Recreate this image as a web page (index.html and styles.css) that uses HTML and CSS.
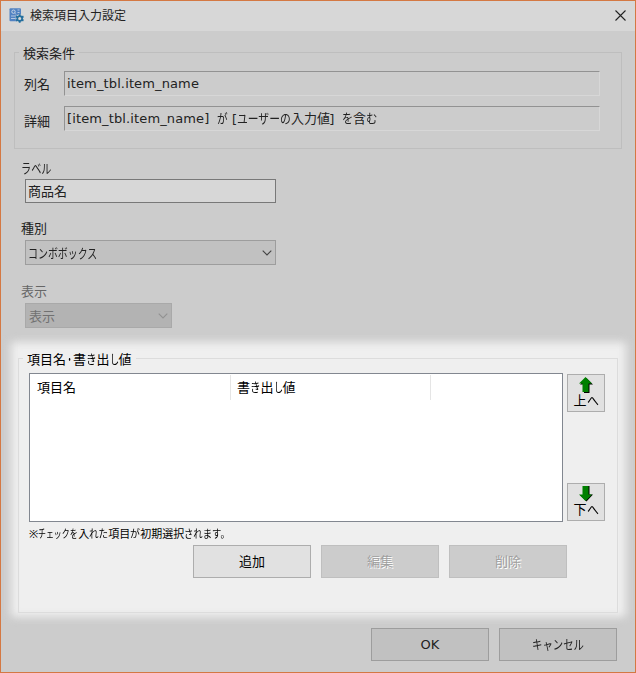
FILE: index.html
```html
<!DOCTYPE html>
<html lang="ja">
<head>
<meta charset="utf-8">
<title>検索項目入力設定</title>
<link rel="stylesheet" href="styles.css">
</head>
<body>
<main class="dialog">
  <header class="titlebar">
    <svg class="app-icon" width="15" height="15" viewBox="0 0 15 15">
      <rect x="0.5" y="0.3" width="11.500" height="13" rx="1" fill="#5182c2"/>
      <circle cx="4.500" cy="3.700" r="1.700" fill="none" stroke="#c8d5e5"/>
      <path d="M6 5.200 7 6.500M8.500 2h2M8.500 4.500h2M2 8h5M2 10.500h4" stroke="#b5c8e0" fill="none"/>
      <circle cx="10.700" cy="10.500" r="4.300" fill="#d7d7d7"/>
      <path d="M10.700 6.300v8.400M6.900 8.400l7.600 4.200M6.900 12.600l7.600-4.200" stroke="#246f9e" stroke-width="1.800"/>
      <circle cx="10.700" cy="10.500" r="2.400" fill="#d7d7d7" stroke="#246f9e" stroke-width="1.700"/>
    </svg>
    <h1 class="title">検索項目入力設定</h1>
    <svg class="close" width="11" height="11" viewBox="0 0 11 11"><path d="M.5.5l10 10M10.500.5l-10 10" stroke="#222" stroke-width="1.100"/></svg>
  </header>

  <section class="group condition">
    <h2 class="legend">検索条件</h2>
    <div class="row"><span class="name">列名</span><div class="sunken"><span class="query">item_tbl.item_name</span></div></div>
    <div class="row"><span class="name detail">詳細</span><div class="sunken"><span class="query wide">[item_tbl.item_name]</span><span class="fit ga">が</span><span class="bracket">[</span><span class="fit user">ユーザーの</span>入力値<span class="bracket close-b">]</span><span class="fit wo">を</span>含<span class="fit mu">む</span></div></div>
  </section>

  <section class="fields">
    <label class="caption"><span class="fit label-kana">ラベル</span></label>
    <div class="box input">商品名</div>
    <label class="caption">種別</label>
    <div class="box select"><span class="fit combo">コンボボックス</span><svg width="10" height="6" viewBox="0 0 10 6"><path d="M.7.7 5 5 9.300.7" fill="none" stroke="#444" stroke-width="1.100"/></svg></div>
    <label class="caption muted">表示</label>
    <div class="box select disabled">表示<svg width="10" height="6" viewBox="0 0 10 6"><path d="M.7.7 5 5 9.300.7" fill="none" stroke="#929292" stroke-width="1.100"/></svg></div>
  </section>

  <div class="spotlight">
  <section class="group items">
    <h2 class="legend">項目名<span class="fit dot">・</span>書<span class="fit ki">き</span>出<span class="fit shi">し</span>値</h2>
    <div class="list-row">
      <div class="list">
        <div class="col">項目名</div>
        <div class="col">書<span class="fit ki">き</span>出<span class="fit shi">し</span>値</div>
      </div>
      <div class="movers">
        <button class="move"><svg width="14" height="16" viewBox="0 0 14 16"><path d="M7.500 1 14 7.500h-3.500V16H5V7.500H1z" fill="#000"/><path d="M6.500 0 13 6.500H9.500V15h-6V6.500H0z" fill="#008000"/></svg><span>上<span class="fit he">へ</span></span></button>
        <button class="move"><svg width="14" height="16" viewBox="0 0 14 16"><path d="M4.500 0h6v8.500H14L7.500 15.500 1 9h3.500z" fill="#000"/><path d="M3.500 0h6v8.500H13L6.500 15 0 8.500h3.500z" fill="#008000"/></svg><span>下<span class="fit he">へ</span></span></button>
      </div>
    </div>
    <p class="note">※<span class="fit check">チェックを</span>入<span class="fit reta">れた</span>項目<span class="fit nga">が</span>初期選択<span class="fit sare">されます。</span></p>
    <div class="actions">
      <button class="btn">追加</button>
      <button class="btn off">編集</button>
      <button class="btn off">削除</button>
    </div>
  </section>
  </div>

  <footer class="footer">
    <button class="btn dim latin">OK</button>
    <button class="btn dim"><span class="fit cancel">キャンセル</span></button>
  </footer>
</main>
</body>
</html>
```
FILE: styles.css
```css
* { box-sizing: border-box; }
body {
  margin: 0;
  font: 13px/20px "Noto Sans", "Noto Sans CJK JP", sans-serif;
  color: #222;
}
h1, h2, p { margin: 0; font: inherit; }
button { font: inherit; color: #000; padding: 0; border-radius: 0; }
svg { display: block; flex: none; }

.dialog {
  width: 636px;
  height: 673px;
  border: 1px solid #d47843;
  background: #ccc;
  white-space: nowrap;
}
.titlebar {
  display: flex;
  align-items: center;
  height: 30px;
  padding: 0 9px 2px 8px;
  background: #d7d7d7;
}
.title { margin-left: 6px; padding-top: 1px; font-size: 12px; }
.close { margin-left: auto; }

.fit {
  display: inline-block;
  width: var(--w);
  transform: scaleX(var(--s));
  transform-origin: left;
}
.ga { --w: 15px; --s: .82; }
.user { --w: 54px; --s: .83; }
.wo { --w: 11px; --s: .85; }
.mu { --w: 12px; --s: .88; }
.label-kana { --w: 30px; --s: .78; }
.combo { --w: 70px; --s: .765; }
.dot { --w: 7px; --s: .55; }
.ki { --w: 10.5px; --s: .82; }
.shi { --w: 9px; --s: .7; }
.he { --w: 12px; --s: .92; }
.check { --w: 40px; --s: .72; }
.reta { --w: 19px; --s: .87; }
.nga { --w: 10px; --s: .9; }
.sare { --w: 44px; --s: .85; }
.cancel { --w: 52px; --s: .8; }

.group { border: 1px solid #bebebe; }
.legend {
  width: max-content;
  height: 20px;
  margin: -10px 0 0 4px;
  padding: 0 4px;
  background: #ccc;
}
.condition { width: 608px; height: 97px; margin: 21px 0 0 13px; }
.row { display: flex; height: 25px; margin: 8px 0 0 9px; }
.row + .row { margin-top: 10px; }
.name { width: 40px; padding-top: 3px; }
.detail { padding-top: 5px; }
.sunken {
  display: flex;
  width: 536px;
  height: 25px;
  padding: 1px 2px;
  border: 1px solid;
  border-color: #929292 #d7d7d7 #d7d7d7 #929292;
}
.query, .latin { font-family: "DejaVu Sans", sans-serif; }
.query { padding-top: 1px; letter-spacing: .13px; }
.wide { width: 150px; }
.bracket { width: 5px; }
.close-b { width: 12px; }

.fields { height: 209px; padding: 9px 0 0 20px; }
.caption { display: block; height: 20px; }
.box {
  display: flex;
  align-items: center;
  width: 251px;
  height: 24px;
  margin: 1px 0 15px 4px;
  padding: 0 3px 0 2px;
  border: 1px solid #787878;
  background: #d7d7d7;
}
.select {
  height: 25px;
  margin: 2px 0 16px 4px;
  border-color: #9d9d9d;
  background: #c1c1c1;
  justify-content: space-between;
}
.muted { color: #666; }
.disabled {
  width: 147px;
  padding-left: 3px;
  color: #717171;
  background: #b3b3b3;
  border-color: #a9a9a9;
}

.spotlight {
  position: relative;
  isolation: isolate;
  width: 600px;
  margin-left: 17px;
  color: #000;
}
.spotlight::before {
  content: "";
  position: absolute;
  z-index: -1;
  inset: -16px -8px -4px -7px;
  background: #efefef;
  filter: blur(4px);
}
.items { height: 255px; border-color: #dcdcdc; }
.items .legend { background: #efefef; }
.list-row { display: flex; gap: 4px; margin: 4px 0 0 10px; }
.list {
  display: flex;
  width: 534px;
  height: 149px;
  padding-top: 1px;
  border: 1px solid #828790;
  background: #fff;
}
.col {
  width: 200px;
  height: 25px;
  padding: 2px 0 0 6px;
  border-right: 1px solid #e5e5e5;
}
.col:first-child { width: 201px; padding-left: 7px; }
.movers { display: flex; flex-direction: column; justify-content: space-between; padding: 1px 0; }
.move {
  display: flex;
  flex-direction: column;
  align-items: center;
  width: 38px;
  height: 38px;
  padding-top: 2px;
  border: 1px solid #adadad;
  background: #e1e1e1;
  line-height: 15px;
}
.note { height: 23px; margin-left: 10px; padding-top: 2px; font-size: 11px; }
.actions { display: flex; gap: 10px; margin-left: 174px; }
.btn {
  width: 118px;
  height: 33px;
  padding-bottom: 2px;
  border: 1px solid #adadad;
  background: #e1e1e1;
}
.off { color: #a0a0a0; background: #ccc; border-color: #bfbfbf; text-shadow: 1px 1px #fff; }
.dim { color: #222; background: #c1c1c1; border-color: #9d9d9d; }
.btn.latin { padding-bottom: 0; }
.footer { display: flex; justify-content: flex-end; gap: 10px; margin: 15px 18px 0 0; }
```
